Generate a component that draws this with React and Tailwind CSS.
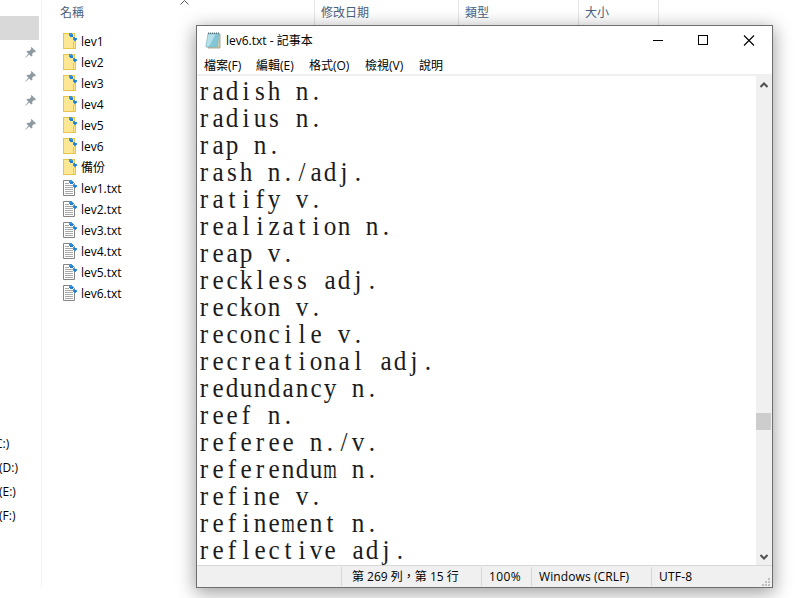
const lines = [
  'radish n.', 'radius n.', 'rap n.', 'rash n./adj.', 'ratify v.', 'realization n.',
  'reap v.', 'reckless adj.', 'reckon v.', 'reconcile v.', 'recreational adj.',
  'redundancy n.', 'reef n.', 'referee n./v.', 'referendum n.', 'refine v.',
  'refinement n.', 'reflective adj.',
];
const folders = ['lev1', 'lev2', 'lev3', 'lev4', 'lev5', 'lev6', '備份'];
const files = ['lev1.txt', 'lev2.txt', 'lev3.txt', 'lev4.txt', 'lev5.txt', 'lev6.txt'];

function SyncMark() {
  return (
    <g shapeRendering="crispEdges">
      <path d="M6 0h3v1h1v3H7V3H6zM10 4h2v1h2v2h-1v1h-2V7h-1z" fill="#3c94dc" />
      <path d="M7 2h3v2H7zM11 5h2v2h-2z" fill="#1f7fd0" />
    </g>
  );
}

function FolderIcon() {
  return (
    <svg width="14" height="17" viewBox="0 0 14 17" className="shrink-0" shapeRendering="crispEdges">
      <path d="M.5.5h11v8h1v7H.5z" fill="#fee793" stroke="#e8c54d" />
      <path d="M10.500 15.500V9.500l1-1" fill="none" stroke="#e8c54d" />
      <SyncMark />
    </svg>
  );
}

function FileIcon() {
  return (
    <svg width="14" height="17" viewBox="0 0 14 17" className="shrink-0">
      <path d="M.5.5h8l3 3v12H.5z" fill="#fff" stroke="#858585" />
      <path d="M2 3.500h4M2 5.500h8M2 7.500h8M2 9.500h8M2 11.500h8M2 13.500h8" stroke="#a8a8a8" />
      <SyncMark />
    </svg>
  );
}

function Pin() {
  return (
    <svg width="11" height="11" viewBox="0 0 11 11" fill="#8d989f">
      <path d="M6.500 0 11 4.500 9.800 5.200 9 5 7.200 6.800 7.400 8.700 6.300 9.400 4.200 7.400.500 10.700 0 10.500 3.500 6.700 1.500 4.700 2.300 3.700 4.300 3.900 6.200 2 6 .800z" />
    </svg>
  );
}

function NotepadIcon() {
  return (
    <svg width="16" height="17" viewBox="0 0 16 17">
      <path d="M4 2h11v14H3z" fill="#d6cfae" stroke="#8e8a70" strokeWidth=".7" />
      <path d="M3 1.500h11l-1.500 13.500H.8z" fill="#82c6d8" stroke="#7fb0bd" strokeWidth=".6" />
      <path d="M3.400 2.500h7L4 14.500H1.300z" fill="#b5e0ea" />
      <path d="M3 1.300h11" stroke="#56727b" strokeWidth="1.600" strokeDasharray="1 1" />
    </svg>
  );
}

// Fixed-pitch serif text: every glyph is centred in a 14px cell.
function Line({ text }) {
  return (
    <div className="flex h-[27px] whitespace-pre">
      {[...text].map((c, i) => (
        <span
          key={i}
          className={
            'flex w-[14px] shrink-0 justify-center ' +
            (c === 'm' ? 'scale-x-[0.62]' : c === '.' ? 'scale-x-90' : 'scale-x-[0.9]')
          }
        >
          {c}
        </span>
      ))}
    </div>
  );
}

function Explorer() {
  return (
    <div className="flex h-full">
      <div className="flex h-[587px] w-[42px] shrink-0 flex-col overflow-hidden border-r border-[#f2f2f2]">
        <div className="mt-4 h-6 w-[39px] bg-[#d9d9d9]" />
        <div className="flex flex-col">
          {[0, 1, 2, 3].map((i) => (
            <div key={i} className="flex h-6 items-center pl-[25px]"><Pin /></div>
          ))}
        </div>
        <div className="mt-[296px] -ml-px flex flex-col text-[12px] leading-6 whitespace-nowrap">
          <div className="-ml-1">C:)</div>
          <div>(D:)</div>
          <div>(E:)</div>
          <div>(F:)</div>
        </div>
      </div>
      <div className="min-w-0 flex-1">
        <div className="flex h-[25px] text-[12px] leading-[25px] text-[#4c607a]">
          <div className="flex w-[273px] justify-between border-r border-[#e5e5e5] pl-[18px]">
            <span>名稱</span>
            <svg width="9" height="5" viewBox="0 0 9 5" className="mr-[125px]" fill="none" stroke="#555">
              <path d="m.5 4.500 4-4 4 4" />
            </svg>
          </div>
          <div className="w-[144px] border-r border-[#e5e5e5] pl-[6px]">修改日期</div>
          <div className="w-[120px] border-r border-[#e5e5e5] pl-[6px]">類型</div>
          <div className="w-[80px] border-r border-[#e5e5e5] pl-[6px]">大小</div>
        </div>
        <div className="mt-[6px] pl-[21px] text-[12px] leading-[21px]">
          {folders.map((n) => (
            <div key={n} className="flex h-[21px] items-center gap-[4px]"><FolderIcon /><span>{n}</span></div>
          ))}
          {files.map((n) => (
            <div key={n} className="flex h-[21px] items-center gap-[4px]"><FileIcon /><span>{n}</span></div>
          ))}
        </div>
      </div>
    </div>
  );
}

function Notepad() {
  return (
    <div className="absolute top-[25px] left-[196px] flex h-[563px] w-[577px] flex-col border border-[#6e6e6e] bg-white shadow-[0_4px_17px_1px_rgba(0,0,0,0.38)]">
      <div className="flex h-[29px] items-center pl-[8px] text-[12px]">
        <NotepadIcon />
        <span className="ml-[5px] whitespace-nowrap">lev6.txt - 記事本</span>
        <svg width="103" height="11" viewBox="0 0 103 11" className="mr-[16px] ml-auto" fill="none" stroke="#000">
          <path d="M0 5.500h10M45.500.5h9v9h-9z" shapeRendering="crispEdges" />
          <path d="m91 .5 10 10m0-10-10 10" strokeWidth="1.1" />
        </svg>
      </div>
      <div className="flex h-[21px] shrink-0 border-b-2 border-[#f0f0f0] text-[12px] leading-[22px] whitespace-nowrap">
        <span className="w-[52px] shrink-0 pl-[7px]">檔案(F)</span>
        <span className="w-[53px] shrink-0 pl-[7px]">編輯(E)</span>
        <span className="w-[56px] shrink-0 pl-[7px]">格式(O)</span>
        <span className="w-[54px] shrink-0 pl-[7px]">檢視(V)</span>
        <span className="pl-[7px]">說明</span>
      </div>
      <div className="flex h-[489px] shrink-0">
        <div className="flex-1 overflow-hidden pt-px font-['Liberation_Serif',serif] text-[28px] leading-[27px] text-[#1c1c1c]">
          {lines.map((t) => <Line key={t} text={t} />)}
        </div>
        <div className="flex w-4 flex-col items-center bg-[#f0f0f0]">
          <svg width="8" height="6" viewBox="0 0 8 6" className="mt-[6px]" fill="none" stroke="#505050" strokeWidth="2"><path d="m.5 5 3.500-3.500L7.500 5" /></svg>
          <div className="mt-[325px] h-[17px] w-[15px] self-start bg-[#cdcdcd]" />
          <svg width="8" height="6" viewBox="0 0 8 6" className="mt-auto mb-[5px]" fill="none" stroke="#505050" strokeWidth="2"><path d="m.5 1 3.500 3.500L7.500 1" /></svg>
        </div>
      </div>
      <div className="flex flex-1 border-t border-[#d7d7d7] bg-[#f0f0f0] pt-px pb-px text-[12px] leading-[19px] whitespace-nowrap">
        <div className="w-[145px] border-r border-[#d7d7d7]" />
        <div className="w-[140px] border-r border-[#d7d7d7] pl-[10px]">第 269 列，第 15 行</div>
        <div className="w-[50px] border-r border-[#d7d7d7] pl-[7px] tracking-[0.4px]">100%</div>
        <div className="w-[120px] border-r border-[#d7d7d7] pl-[7px] tracking-[0.1px]">Windows (CRLF)</div>
        <div className="flex-1 pl-[7px] tracking-[0.2px]">UTF-8</div>
        <svg width="8" height="8" viewBox="0 0 8 8" className="mr-[2px] self-end" fill="#bfbfbf" shapeRendering="crispEdges">
          <path d="M6 0h2v2H6zM3 3h2v2H3zM6 3h2v2H6zM0 6h2v2H0zM3 6h2v2H3zM6 6h2v2H6z" />
        </svg>
      </div>
    </div>
  );
}

export default function App() {
  return (
    <div className="relative h-[598px] w-[803px] overflow-hidden bg-white font-['Open_Sans','Noto_Sans_CJK_TC',sans-serif] text-black">
      <Explorer />
      <Notepad />
    </div>
  );
}
